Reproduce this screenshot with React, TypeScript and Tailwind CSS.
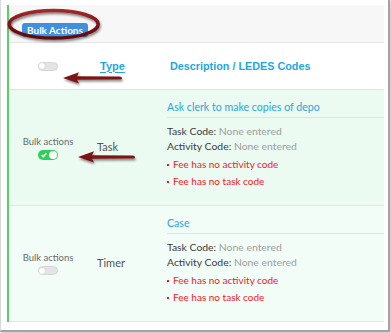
import React from "react";

const ToggleOff = () => (
  <div className="w-[20px] h-[9px] rounded-full bg-[#e4e4e4] border border-[#d6d6d6] flex items-center box-border">
    <div className="w-[8px] h-[8px] rounded-full bg-white border border-[#d8d8d8] box-border -ml-[1px]" />
  </div>
);

const ToggleOn = () => (
  <div className="w-[20px] h-[10px] rounded-full bg-[#2fcf5a] flex items-center justify-between pl-[3px] pr-[1px] box-border">
    <svg width="6" height="6" viewBox="0 0 6 6">
      <path d="M0.6 3.1 L2.3 4.7 L5.4 1.2" stroke="white" strokeWidth="1.5" fill="none" />
    </svg>
    <div className="w-[8px] h-[8px] rounded-full bg-white" />
  </div>
);

type RowProps = { on?: boolean; type: string; title: string; bg: string };

const Row = ({ on, type, title, bg }: RowProps) => (
  <div className={`flex h-[116px] border-b border-[#e3e6e4] box-border ${bg}`}>
    <div className="w-[78px] flex flex-col items-center justify-center gap-[2px]">
      <span className="text-[9.5px] leading-[12px] text-[#6a6a6a]">Bulk actions</span>
      {on ? <ToggleOn /> : <ToggleOff />}
    </div>
    <div className="w-[80px] flex items-center pl-[10px] text-[11px] text-[#555]">{type}</div>
    <div className="flex-1 pt-[10px]">
      <div className="text-[10.6px] leading-[15px] text-[#2ea3dc] pb-[2px] border-b border-[#dfe3e1]">{title}</div>
      <div className="mt-[6px] text-[10.4px] leading-[15px] text-[#3a3a3a]">
        Task Code: <span className="text-[#9d9d9d]">None entered</span>
      </div>
      <div className="text-[10.4px] leading-[15px] text-[#3a3a3a]">
        Activity Code: <span className="text-[#9d9d9d]">None entered</span>
      </div>
      <div className="mt-[2px] text-[10px] leading-[17px] text-[#f5161b] flex items-center">
        <span className="w-[2px] h-[2px] bg-[#f5161b] mr-[4px]" />Fee has no activity code
      </div>
      <div className="text-[10px] leading-[17px] text-[#f5161b] flex items-center">
        <span className="w-[2px] h-[2px] bg-[#f5161b] mr-[4px]" />Fee has no task code
      </div>
    </div>
  </div>
);

export default function App() {
  return (
    <div className="relative w-[391px] h-[333px] bg-white" style={{ fontFamily: "Lato, 'Open Sans', sans-serif" }}>
      <div className="w-[390px] h-[332px] box-border border-l border-l-[#d8d8d8] border-r-2 border-r-[#a3a3a3] border-b-2 border-b-[#a3a3a3] pl-[6px] pt-[5px] shadow-[1px_1px_2px_rgba(0,0,0,0.25)]">
        <div className="w-[377px] border-l-2 border-[#55d166]">
          {/* toolbar */}
          <div className="h-[38px] bg-[#f7f7f7] border-b border-[#e6e6e6] box-border pl-[13px] pt-[11px]">
            <div className="inline-flex items-center h-[14px] px-[5px] rounded-[3px] bg-[#4190e0] text-white text-[10px] font-bold leading-none">
              Bulk Actions
            </div>
          </div>
          {/* header */}
          <div className="flex h-[47px] bg-white border-b border-[#e3e3e3] box-border items-center" style={{ fontFamily: "'Liberation Sans', Arial, sans-serif" }}>
            <div className="w-[78px] flex justify-center">
              <ToggleOff />
            </div>
            <div className="w-[80px] pl-[13px] text-[11px] font-bold text-[#1ea6e2] underline underline-offset-2">Type</div>
            <div className="pl-[3px] text-[10.8px] font-bold text-[#1ea6e2]">Description / LEDES Codes</div>
          </div>
          <Row on type="Task" title="Ask clerk to make copies of depo" bg="bg-[#ebfbf2]" />
          <Row type="Timer" title="Case" bg="bg-[#f3fdf8]" />
        </div>
      </div>
      {/* annotations */}
      <svg className="absolute left-0 top-0 pointer-events-none" width="391" height="333" viewBox="0 0 391 333">
        <defs>
          <linearGradient id="ov" x1="0" y1="0" x2="0" y2="1">
            <stop offset="0" stopColor="#a0292d" />
            <stop offset="0.5" stopColor="#7c1418" />
            <stop offset="1" stopColor="#5e0b0e" />
          </linearGradient>
          <filter id="sh" x="-20%" y="-40%" width="140%" height="180%">
            <feDropShadow dx="1" dy="2" stdDeviation="1.2" floodColor="#000" floodOpacity="0.45" />
          </filter>
        </defs>
        <ellipse cx="53.7" cy="24.3" rx="44.5" ry="13.8" fill="none" stroke="url(#ov)" strokeWidth="3.5" filter="url(#sh)" />
        <path d="M63,78 L79,72.3 L77,76.2 L120,76.6 Q123.5,77.8 121,79.6 L77,79.8 L79,83.6 Z" fill="#7b1215" filter="url(#sh)" />
        <path d="M78,157 L94,151.3 L92,155.2 L133,155.6 Q136.5,156.8 134,158.6 L92,158.8 L94,162.6 Z" fill="#7b1215" filter="url(#sh)" />
      </svg>
    </div>
  );
}
